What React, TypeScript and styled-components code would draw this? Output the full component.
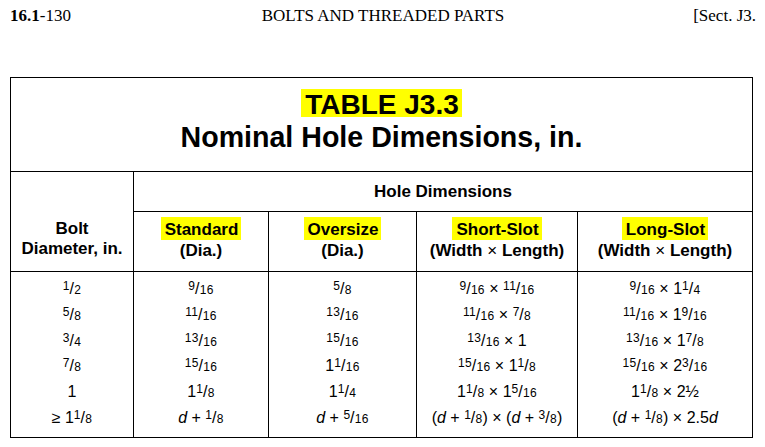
import React from "react";
import styled, { createGlobalStyle } from "styled-components";

const GlobalStyle = createGlobalStyle`
	html, body {
		margin: 0;
		padding: 0;
		background: #fff;
		color: #000;
	}
`;

const Page = styled.div`
	width: 765px;
	height: 447px;
	overflow: hidden;
	background: #fff;
`;

const PageHeader = styled.header`
	display: grid;
	grid-template-columns: 1fr auto 1fr;
	align-items: baseline;
	padding: 6px 9px 0 10px;
	font-family: "Liberation Serif", "Times New Roman", serif;
	font-size: 17px;
	line-height: 20px;
`;

const Folio = styled.div`
	text-align: left;
`;

const RunningTitle = styled.div`
	text-align: center;
`;

const Section = styled.div`
	text-align: right;
`;

const Table = styled.div`
	margin: 51px 0 0 10px;
	width: 743px;
	box-sizing: border-box;
	display: grid;
	grid-template-columns: 123px 135px 148px 161px 175px;
	grid-template-rows: 94px 40px 60px;
	border-right: 1px solid #000;
	border-bottom: 1px solid #000;
	font-family: "Liberation Sans", Arial, sans-serif;
	color: #000;
`;

const Cell = styled.div`
	box-sizing: border-box;
	border-left: 1px solid #000;
	border-top: 1px solid #000;
	text-align: center;
`;

const TitleCell = styled(Cell)`
	grid-column: 1 / -1;
	padding-top: 11px;
	font-weight: bold;
	line-height: 32px;
`;

const TitleLine = styled.div<{ $size: number }>`
	font-size: ${(p) => p.$size}px;
`;

const Highlight = styled.span<{ $h: number; $lh: number }>`
	display: inline-block;
	height: ${(p) => p.$h}px;
	line-height: ${(p) => p.$lh}px;
	padding: 0 3px 0 4px;
	background: #ffff00;
	vertical-align: baseline;
`;

const HeadCell = styled(Cell)`
	font-size: 17px;
	font-weight: bold;
`;

const BoltCell = styled(HeadCell)`
	grid-column: 1;
	grid-row: 2 / 4;
	display: flex;
	flex-direction: column;
	justify-content: flex-end;
	padding-bottom: 12px;
	line-height: 20px;
`;

const GroupCell = styled(HeadCell)`
	grid-column: 2 / -1;
	display: flex;
	align-items: center;
	justify-content: center;
	line-height: 19px;
`;

const ColHead = styled(HeadCell)`
	padding-top: 5px;
	line-height: 21px;
`;

const Times = styled.span`
	font-weight: normal;
`;

const BodyCell = styled(Cell)<{ $first?: boolean; $last?: boolean }>`
	border-top: ${(p) => (p.$first ? "1px solid #000" : "none")};
	padding-top: ${(p) => (p.$first ? 4 : 0)}px;
	padding-bottom: ${(p) => (p.$last ? 6 : 0)}px;
	font-size: 16px;
	line-height: 25.8px;
	white-space: nowrap;
`;

const Num = styled.span`
	font-size: 12px;
	letter-spacing: 0.3px;
	vertical-align: 4.5px;
	line-height: 0;
`;

const Slash = styled.span`
	margin: 0 0.3px 0 -0.3px;
`;

const Den = styled.span`
	font-size: 12px;
	letter-spacing: 0.3px;
	line-height: 0;
`;

const Var = styled.i`
	font-style: italic;
`;

const Frac = ({ n, d }: { n: string; d: string }) => (
	<>
		<Num>{n}</Num>
		<Slash>/</Slash>
		<Den>{d}</Den>
	</>
);

const rows: React.ReactNode[][] = [
	[
		<Frac n="1" d="2" />,
		<Frac n="9" d="16" />,
		<Frac n="5" d="8" />,
		<>
			<Frac n="9" d="16" /> × <Frac n="11" d="16" />
		</>,
		<>
			<Frac n="9" d="16" /> × 1<Frac n="1" d="4" />
		</>,
	],
	[
		<Frac n="5" d="8" />,
		<Frac n="11" d="16" />,
		<Frac n="13" d="16" />,
		<>
			<Frac n="11" d="16" /> × <Frac n="7" d="8" />
		</>,
		<>
			<Frac n="11" d="16" /> × 1<Frac n="9" d="16" />
		</>,
	],
	[
		<Frac n="3" d="4" />,
		<Frac n="13" d="16" />,
		<Frac n="15" d="16" />,
		<>
			<Frac n="13" d="16" /> × 1
		</>,
		<>
			<Frac n="13" d="16" /> × 1<Frac n="7" d="8" />
		</>,
	],
	[
		<Frac n="7" d="8" />,
		<Frac n="15" d="16" />,
		<>
			1<Frac n="1" d="16" />
		</>,
		<>
			<Frac n="15" d="16" /> × 1<Frac n="1" d="8" />
		</>,
		<>
			<Frac n="15" d="16" /> × 2<Frac n="3" d="16" />
		</>,
	],
	[
		"1",
		<>
			1<Frac n="1" d="8" />
		</>,
		<>
			1<Frac n="1" d="4" />
		</>,
		<>
			1<Frac n="1" d="8" /> × 1<Frac n="5" d="16" />
		</>,
		<>
			1<Frac n="1" d="8" /> × 2½
		</>,
	],
	[
		<>
			≥ 1<Frac n="1" d="8" />
		</>,
		<>
			<Var>d</Var> + <Frac n="1" d="8" />
		</>,
		<>
			<Var>d</Var> + <Frac n="5" d="16" />
		</>,
		<>
			(<Var>d</Var> + <Frac n="1" d="8" />) × (<Var>d</Var> + <Frac n="3" d="8" />)
		</>,
		<>
			(<Var>d</Var> + <Frac n="1" d="8" />) × 2.5<Var>d</Var>
		</>,
	],
];

const slot = (
	<>
		(Width <Times>×</Times> Length)
	</>
);

const columns = [
	{ name: "Standard", sub: <>(Dia.)</> },
	{ name: "Oversize", sub: <>(Dia.)</> },
	{ name: "Short-Slot", sub: slot },
	{ name: "Long-Slot", sub: slot },
];

export default function App() {
	return (
		<Page>
			<GlobalStyle />
			<PageHeader>
				<Folio>
					<b>16.1</b>-130
				</Folio>
				<RunningTitle>BOLTS AND THREADED PARTS</RunningTitle>
				<Section>[Sect. J3.</Section>
			</PageHeader>
			<Table>
				<TitleCell>
					<TitleLine $size={28}>
						<Highlight $h={28} $lh={32.7}>
							TABLE J3.3
						</Highlight>
					</TitleLine>
					<TitleLine $size={28.6}>Nominal Hole Dimensions, in.</TitleLine>
				</TitleCell>
				<BoltCell>
					<div>Bolt</div>
					<div>Diameter, in.</div>
				</BoltCell>
				<GroupCell>Hole Dimensions</GroupCell>
				{columns.map((c) => (
					<ColHead key={c.name}>
						<Highlight $h={23} $lh={26.2}>
							{c.name}
						</Highlight>
						<div>{c.sub}</div>
					</ColHead>
				))}
				{rows.map((r, i) =>
					r.map((cell, j) => (
						<BodyCell key={`${i}-${j}`} $first={i === 0} $last={i === rows.length - 1}>
							{cell}
						</BodyCell>
					))
				)}
			</Table>
		</Page>
	);
}
